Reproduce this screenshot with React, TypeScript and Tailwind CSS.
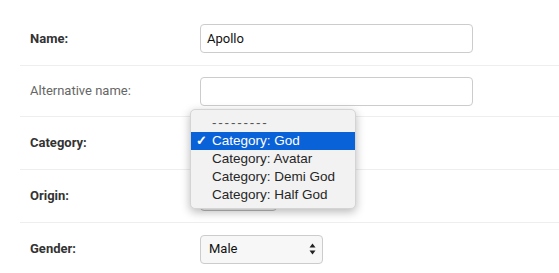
import React from "react";

const labelFont = { fontFamily: "Roboto, 'Liberation Sans', sans-serif" };
const menuFont = { fontFamily: "'Liberation Sans', Arial, sans-serif" };

function Arrows() {
  return (
    <svg width="7" height="12" viewBox="0 0 7 12" className="shrink-0">
      <path d="M3.5 0.5 L6.5 4.5 L0.5 4.5 Z" fill="#222" />
      <path d="M3.5 11.5 L6.5 7.5 L0.5 7.5 Z" fill="#222" />
    </svg>
  );
}

function Row({ label, strong = true, h, children }: { label: string; strong?: boolean; h: string; children?: React.ReactNode }) {
  return (
    <div className={`flex items-center border-b border-[#eeeeee] pl-[10px] ${h}`}>
      <div
        className={`w-[170px] shrink-0 text-[13px] ${strong ? "font-bold text-[#333333]" : "text-[#666666]"}`}
      >
        {label}
      </div>
      {children}
    </div>
  );
}

export default function App() {
  const options = ["Category: God", "Category: Avatar", "Category: Demi God", "Category: Half God"];

  return (
    <div className="relative h-[273px] w-[559px] overflow-hidden bg-white pt-[12px] pl-[20px]" style={labelFont}>
      <Row label="Name:" h="h-[54px]">
        <div className="flex h-[29px] w-[273px] items-center rounded-[4px] border border-[#cccccc] px-[6px] text-[13px] text-[#111]">
          Apollo
        </div>
      </Row>
      <Row label="Alternative name:" strong={false} h="h-[51px]">
        <div className="h-[29px] w-[273px] rounded-[4px] border border-[#cccccc]" />
      </Row>
      <Row label="Category:" h="h-[53px]">
        <div className="h-[29px] w-[110px] rounded-[4px] border border-[#cccccc] bg-[#f6f6f6]" />
      </Row>
      <Row label="Origin:" h="h-[53px]">
        <div className="h-[29px] w-[77px] rounded-[4px] border border-[#bbbbbb] bg-[#f6f6f6]" />
      </Row>
      <Row label="Gender:" h="h-[53px]">
        <div className="flex h-[29px] w-[123px] items-center justify-between rounded-[4px] border border-[#cccccc] bg-[#f7f7f7] pr-[6px] pl-[8px] text-[13px] text-[#111]">
          <span>Male</span>
          <Arrows />
        </div>
      </Row>

      {/* native select popup */}
      <div
        className="absolute left-[190px] top-[109px] w-[166px] rounded-[5px] border border-[#d4d4d4] bg-[#f2f2f2] py-[4px] text-[13.5px] text-[#262626] shadow-[0_3px_10px_rgba(0,0,0,0.28)]"
        style={menuFont}
      >
        <div className="flex h-[18px] items-center pl-[21px] tracking-[1.8px] text-[#555]">---------</div>
        {options.map((o, i) => (
          <div
            key={o}
            className={`relative flex h-[18px] items-center pl-[21px] ${i === 0 ? "bg-[#0a62d8] text-white" : ""}`}
          >
            {i === 0 && <span className="absolute left-[5px] text-[13px] font-bold">✓</span>}
            {o}
          </div>
        ))}
      </div>
    </div>
  );
}
